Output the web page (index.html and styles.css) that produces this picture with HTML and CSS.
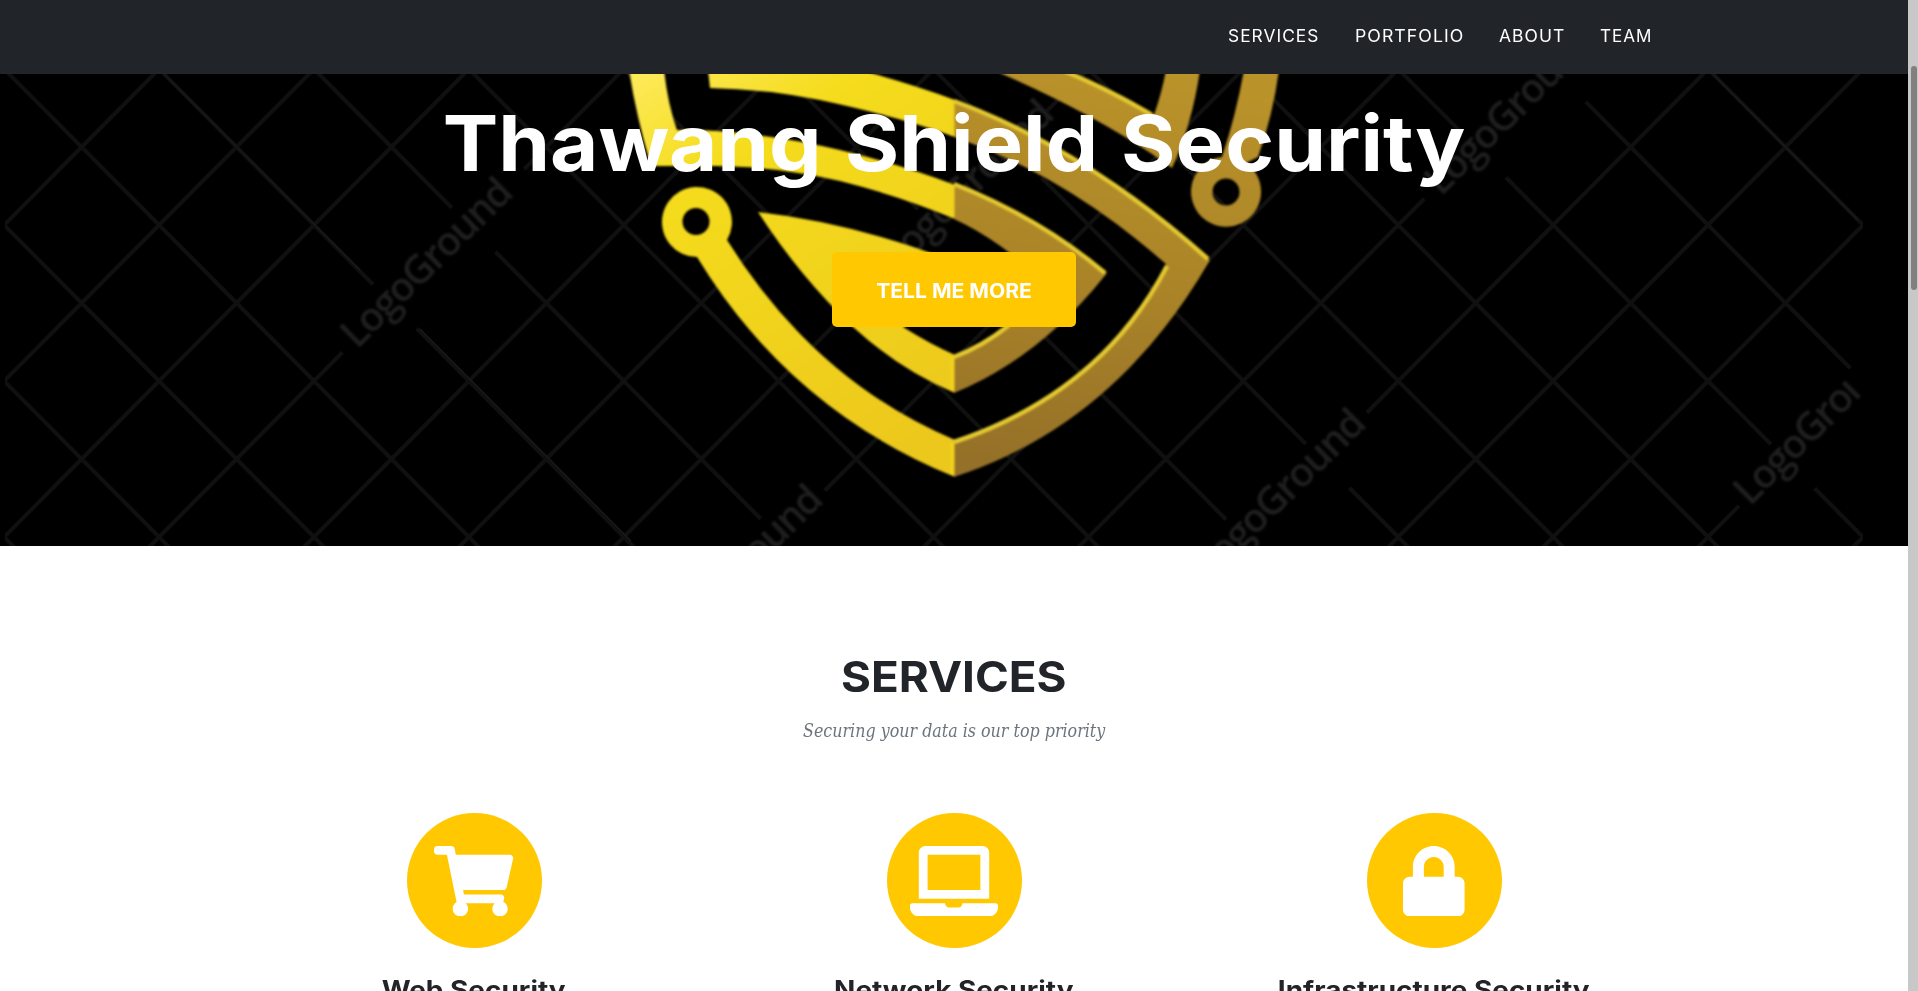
FILE: index.html
```html
<!DOCTYPE html>
<html lang="en">
<head>
<meta charset="utf-8">
<title>Thawang Shield Security</title>
<link rel="stylesheet" href="styles.css">
</head>
<body>
<div class="viewport">
<div class="page">
  <nav class="navbar">
    <a class="nav-link services" href="#services"><span>SERVICES</span></a>
    <a class="nav-link portfolio" href="#portfolio"><span>PORTFOLIO</span></a>
    <a class="nav-link about" href="#about"><span>ABOUT</span></a>
    <a class="nav-link team" href="#team"><span>TEAM</span></a>
  </nav>
  <header class="masthead">
    <svg class="backdrop" viewBox="0 74 1908 472" aria-hidden="true">
      <defs>
        <pattern id="lattice" x="159" y="225" width="154.9" height="156" patternUnits="userSpaceOnUse">
          <path d="M-5-5 160 161M-5 161 160-5" stroke="#101010" stroke-width="4" fill="none"/>
        </pattern>
        <linearGradient id="bright" gradientUnits="userSpaceOnUse" x1="640" y1="74" x2="900" y2="477">
          <stop offset="0" stop-color="#fdea58"/><stop offset=".25" stop-color="#f5dc1c"/><stop offset="1" stop-color="#ecc71c"/>
        </linearGradient>
        <linearGradient id="dark" gradientUnits="userSpaceOnUse" x1="1100" y1="74" x2="1040" y2="477">
          <stop offset="0" stop-color="#b9922a"/><stop offset=".5" stop-color="#ab8428"/><stop offset="1" stop-color="#947028"/>
        </linearGradient>
      </defs>
      <rect y="74" width="1908" height="472" fill="#000"/>
      <rect class="lattice" x="5" y="74" width="1858" height="472" fill="url(#lattice)"/>
      <g class="gaps">
        <path d="M345 355 530 175M897 272 1056 121M1431 206 1590 55M1201 586 1375 421M1745 512 1885 378M656 661 830 496"/>
      </g>
      <path class="fine" d="M164 74 360 270M420 329 631 541M1713 74 1858 220"/>
      <g class="marks">
        <text transform="translate(357 350) rotate(-44.5)" textLength="222">LogoGround</text>
        <text transform="translate(898 272) rotate(-44.5)" textLength="222">LogoGround</text>
        <text transform="translate(1441 197) rotate(-44.5)" textLength="222">LogoGround</text>
        <text transform="translate(1210 581) rotate(-44.5)" textLength="222">LogoGround</text>
        <text transform="translate(1750 507) rotate(-45)" textLength="160">LogoGro&#305;</text>
        <text transform="translate(667 657) rotate(-44.5)" textLength="222">LogoGround</text>
      </g>
      <g class="shield">
        <g fill="url(#bright)">
          <path d="M629 70H664Q668 105 677 130 L700 130 Q780 134 860 155 Q910 168 955 185V219Q900 196 840 181 Q780 167 720 166 L651 166Q636 115 629 70Z"/>
          <path d="M708 70H860Q915 85 955 100V137Q900 117 820 100 Q765 89 710 88Z"/>
          <path d="M758 212Q855 223 955 262V292L903 327Q930 344 955 355V393Q900 370 853 327 Q800 277 758 212Z"/>
          <path fill-rule="evenodd" d="M697 257A35 35 0 1 1 727 240Q815 381 955 440V477Q790 410 697 257ZM709.500 221.500A13.500 13.500 0 1 0 682.500 221.500A13.500 13.500 0 1 0 709.500 221.500Z"/>
        </g>
        <g fill="url(#dark)">
          <path d="M993 70H1064Q1112 90 1154 115Q1162 92 1166 70H1200Q1192 125 1172 168Q1100 116 993 70Z"/>
          <path d="M954 100Q1085 148 1210 260Q1115 425 954 477V440Q1101 391 1166 264Q1065 175 954 137Z"/>
          <path d="M954 183Q1040 217 1107 273Q1040 358 954 393V355Q1010 332 1046 284Q1000 240 954 219Z"/>
          <path fill-rule="evenodd" d="M1244 70H1279Q1273 115 1258 157L1246 163A35 35 0 1 1 1222 157Q1236 115 1244 70ZM1239.500 192A13.500 13.500 0 1 0 1212.500 192A13.500 13.500 0 1 0 1239.500 192Z"/>
        </g>
        <path class="edge" d="M954 101Q1085 149 1208 259M954 184Q1040 218 1105 273M954 442Q1101 393 1167 266M954 357Q985 345 1009 325M1062 70Q1112 91 1152 115"/>
        <path class="seam" d="M952.500 102V136M952.500 185V217M952.500 357V391M952.500 443V475"/>
      </g>
    </svg>
    <h1 class="title"><span>Thawang Shield Security</span></h1>
    <a class="button" href="#services"><span>TELL ME MORE</span></a>
  </header>
  <section class="services-section" id="services">
    <h2 class="section-heading"><span>SERVICES</span></h2>
    <h3 class="section-subheading"><span>Securing your data is our top priority</span></h3>
    <div class="cards">
      <article class="card">
        <div class="disc"><svg viewBox="0 0 576 512"><path d="M528.120 301.319l47.273-208C578.806 78.301 567.391 64 551.990 64H159.208l-9.166-44.810C147.758 8.021 137.930 0 126.529 0H24C10.745 0 0 10.745 0 24v16c0 13.255 10.745 24 24 24h69.883l70.248 343.435C147.325 417.100 136 435.222 136 456c0 30.928 25.072 56 56 56s56-25.072 56-56c0-15.674-6.447-29.835-16.824-40h209.647C430.447 426.165 424 440.326 424 456c0 30.928 25.072 56 56 56s56-25.072 56-56c0-22.172-12.888-41.332-31.579-50.405l5.517-24.276c3.413-15.018-8.002-29.319-23.403-29.319H218.117l-6.545-32h293.145c11.206 0 20.920-7.754 23.403-18.681z"/></svg></div>
        <h4 class="web"><span>Web Security</span></h4>
      </article>
      <article class="card">
        <div class="disc"><svg class="laptop" viewBox="0 0 640 512"><path d="M624 416H381.540c-.740 19.810-14.710 32-32.740 32H288c-18.690 0-33.020-17.470-32.770-32H16c-8.800 0-16 7.200-16 16v16c0 35.200 28.800 64 64 64h512c35.200 0 64-28.800 64-64v-16c0-8.800-7.200-16-16-16zM576 48c0-26.400-21.600-48-48-48H112C85.600 0 64 21.600 64 48v336h512V48zm-64 272H128V64h384v256z"/></svg></div>
        <h4 class="network"><span>Network Security</span></h4>
      </article>
      <article class="card">
        <div class="disc"><svg class="lock" viewBox="0 0 448 512"><path d="M400 224h-24v-72C376 68.200 307.800 0 224 0S72 68.200 72 152v72H48c-26.500 0-48 21.500-48 48v192c0 26.500 21.500 48 48 48h352c26.500 0 48-21.500 48-48V272c0-26.500-21.500-48-48-48zm-104 0H152v-72c0-39.700 32.300-72 72-72s72 32.300 72 72v72z"/></svg></div>
        <h4 class="infra"><span>Infrastructure Security</span></h4>
      </article>
    </div>
  </section>
</div>
<div class="scrollbar"><div class="thumb"></div></div>
</div>
</body>
</html>
```
FILE: styles.css
```css
* { box-sizing: border-box; }
body { margin: 0; background: #fff; color: #212529; font-family: Inter, "Open Sans", sans-serif; }
h1, h2, h3, h4 { margin: 0; }
a { text-decoration: none; color: #fff; }
span { display: inline-block; white-space: nowrap; }
.viewport { display: flex; width: 1918px; height: 991px; overflow: hidden; }
.page { width: 1908px; height: 991px; overflow: hidden; }

.navbar { display: flex; align-items: center; gap: 36px; height: 74px; padding-left: 1228px; padding-bottom: 2px; background: #212529; }
.nav-link { font-size: 16.6px; line-height: 24px; letter-spacing: 1px; }
.nav-link span { transform-origin: left; }
.services { width: 91px; }
.portfolio { width: 108px; }
.about { width: 65px; }
.team { width: 52px; }
.services span { transform: scaleX(1.043); }
.portfolio span { transform: scaleX(1.065); }
.about span { transform: scaleX(1.052); }
.team span { transform: scaleX(1.028); }

.masthead { position: relative; display: flex; flex-direction: column; align-items: center; height: 472px; padding-top: 19px; }
.backdrop { position: absolute; inset: 0; width: 1908px; height: 472px; }
.lattice { filter: blur(.7px); }
.gaps { stroke: #000; stroke-width: 62px; fill: none; }
.fine { stroke: #1c1c1c; stroke-width: 1.2px; fill: none; }
.marks { font: 600 40px "Open Sans", sans-serif; fill: #1f1f1f; filter: blur(1.2px); }
.shield { filter: blur(.9px); }
.edge { fill: none; stroke: #e3c930; stroke-width: 4.5px; }
.seam { fill: none; stroke: #f2d31c; stroke-width: 4px; }
.title { position: relative; color: #fff; font-size: 77px; line-height: 100px; font-weight: 700; }
.title span { word-spacing: 3px; transform: scaleX(1.081); }
.button { position: relative; display: flex; align-items: center; justify-content: center; width: 244px; height: 75px; margin-top: 59px; padding-top: 2px; border-radius: 5px; background: #ffc800; font-size: 19.5px; font-weight: 700; }
.button span { transform: scaleX(1.08); }

.services-section { display: flex; flex-direction: column; align-items: center; padding-top: 104px; }
.section-heading { font-size: 42.500px; line-height: 53px; font-weight: 700; }
.section-heading span { transform: scaleX(1.077); }
.section-subheading { margin-top: 15px; color: #6c757d; font: italic 400 17.6px/26px "DejaVu Serif", serif; }
.section-subheading span { transform: scaleX(.904); }
.cards { display: grid; grid-template-columns: repeat(3, 480px); margin-top: 69px; }
.card { display: flex; flex-direction: column; align-items: center; }
.disc { display: flex; align-items: center; justify-content: center; width: 135px; height: 135px; padding-top: 1px; border-radius: 50%; background: #ffc800; }
.disc svg { width: 79.200px; height: 70.400px; fill: #fff; }
.disc .laptop { width: 88px; }
.disc .lock { width: 61.600px; }
.card h4 { margin-top: 26px; font-size: 25.400px; line-height: 32px; font-weight: 700; }
.card h4 span { transform: scaleX(1.1); }

.scrollbar { width: 10px; height: 991px; padding: 66px 1px 0 3px; background: #c8c8c8; }
.thumb { height: 224px; border-radius: 3px; background: #808080; }
```
